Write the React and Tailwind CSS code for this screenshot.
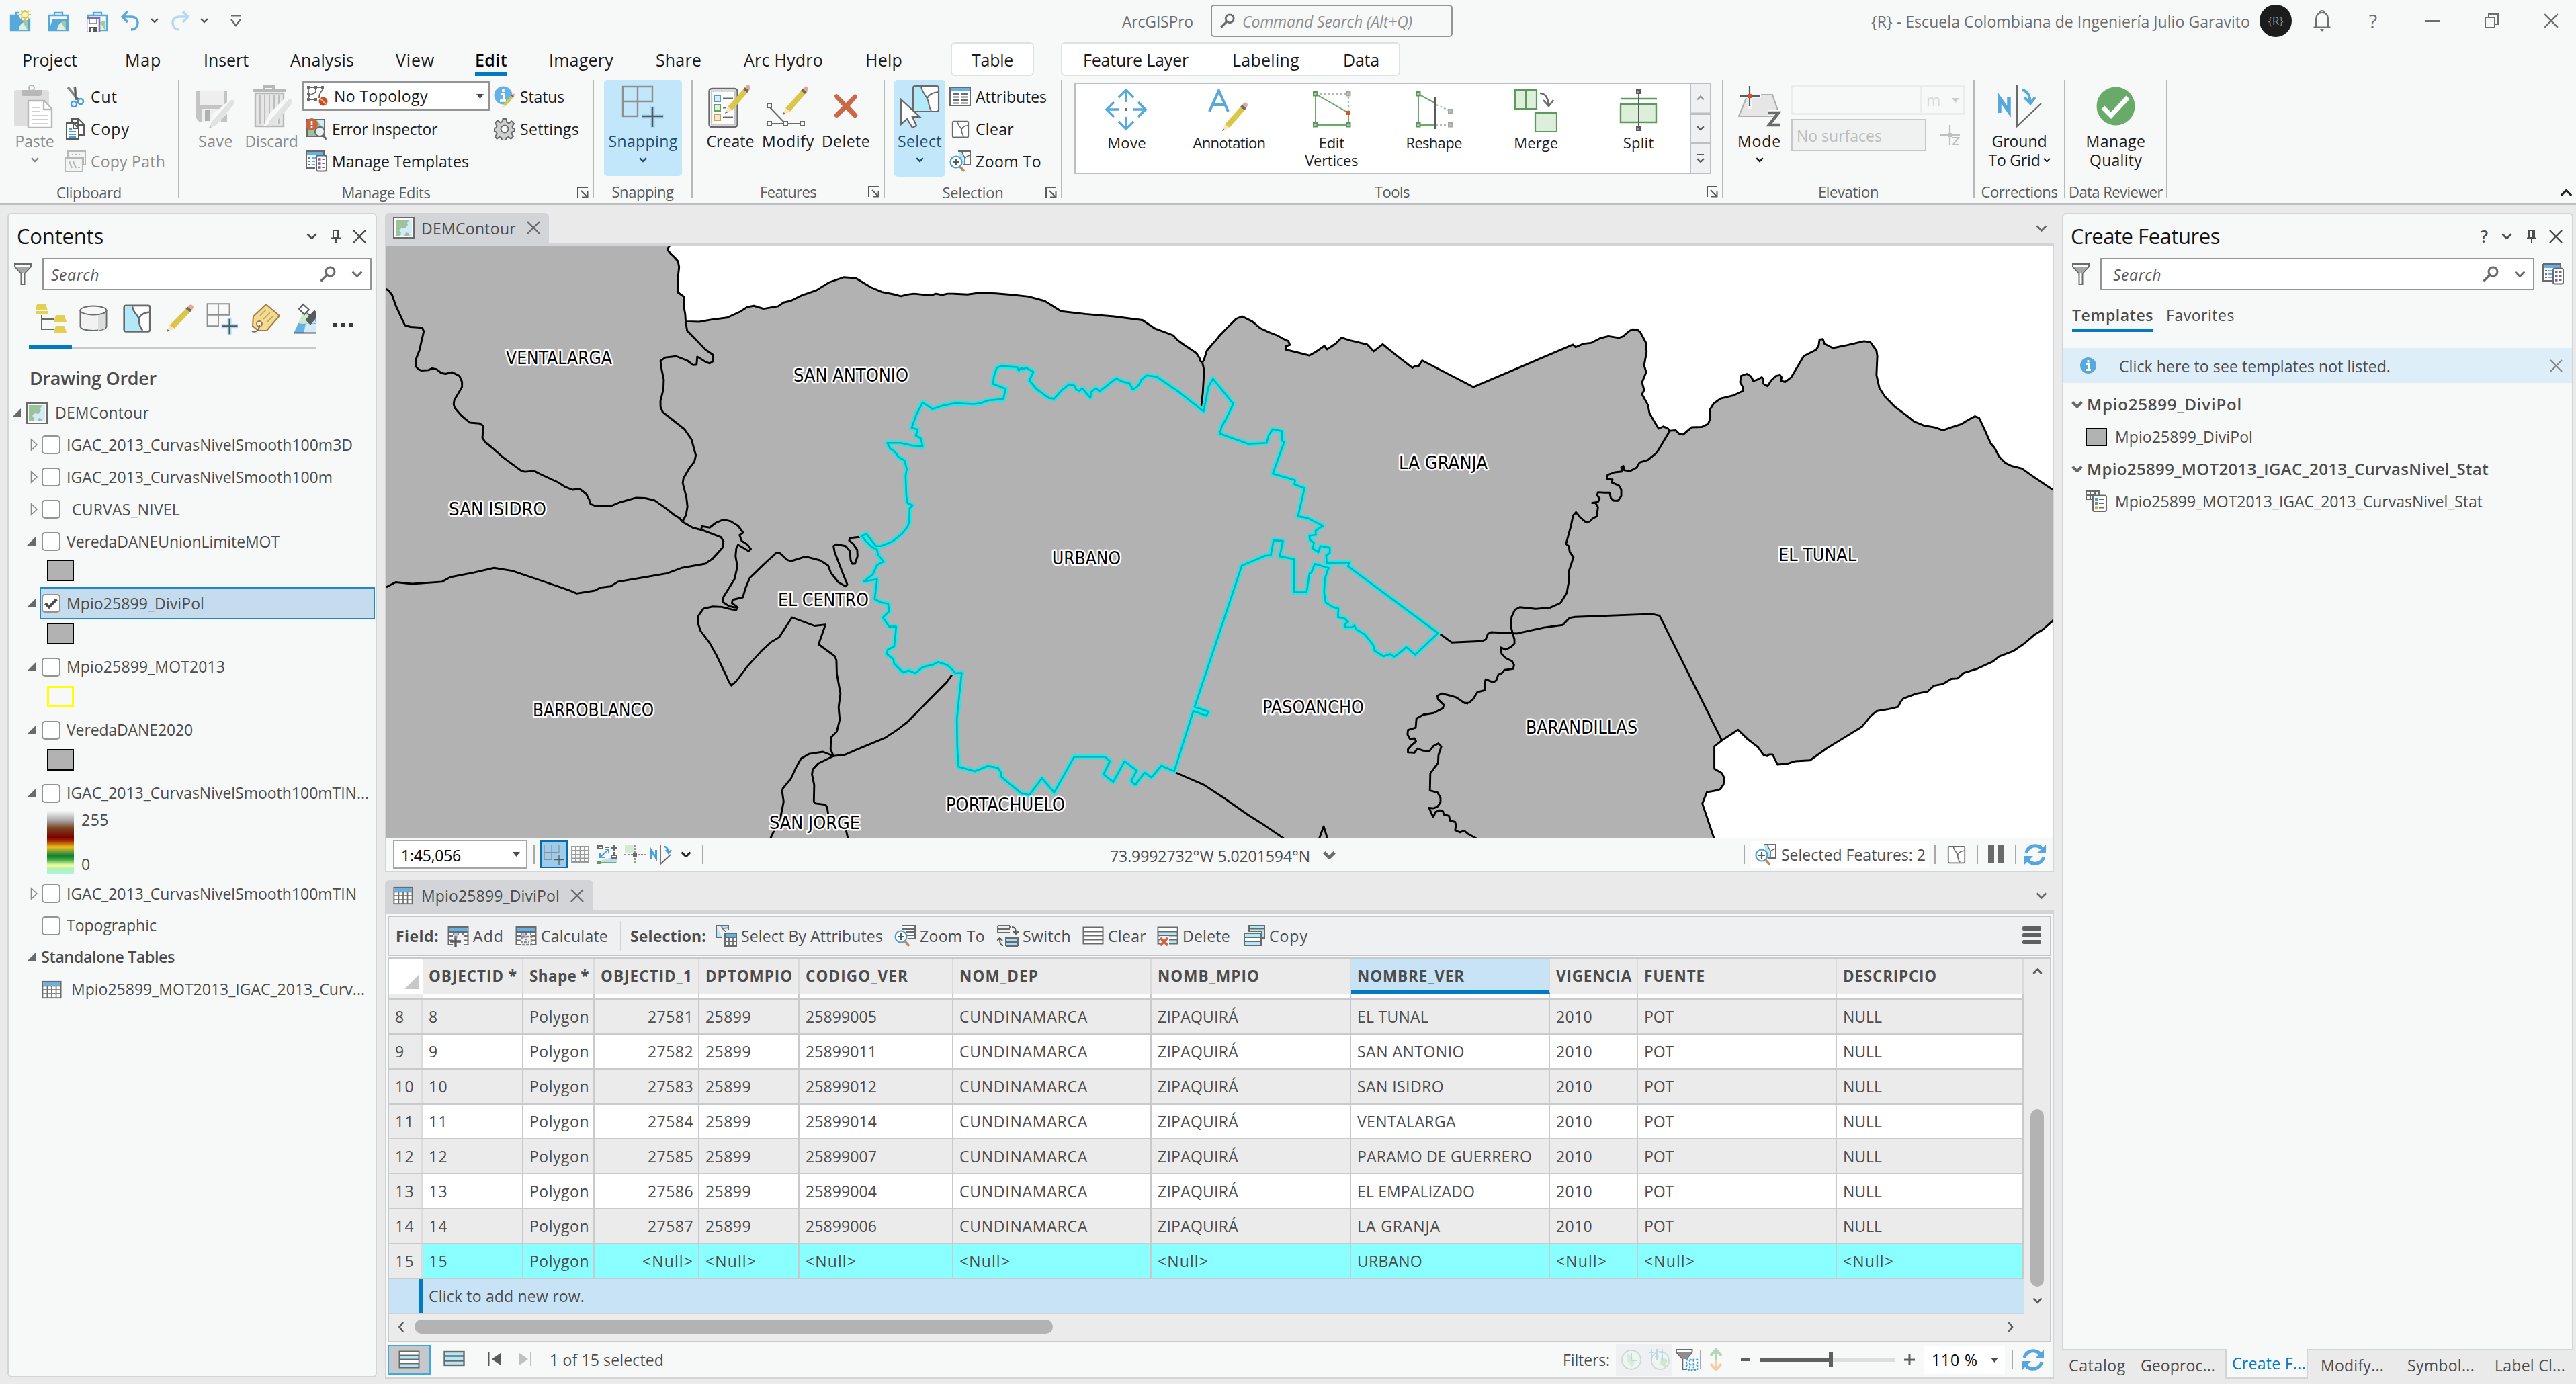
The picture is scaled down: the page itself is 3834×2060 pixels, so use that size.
import React, { useLayoutEffect, useRef } from "react";

/* Text run whose tracking is tuned so that it occupies a given width. */
function T({ w, className = "", children }) {
  const ref = useRef(null);
  useLayoutEffect(() => {
    const el = ref.current;
    if (!el || !w) return;
    el.style.letterSpacing = "0px";
    const natural = el.getBoundingClientRect().width;
    el.style.letterSpacing = `${(w + 3 - natural) / String(children).length}px`;
  });
  return (
    <span className={`inline-flex shrink-0 leading-none ${className}`}>
      <span ref={ref} className="inline-block whitespace-pre">{children}</span>
    </span>
  );
}

/* ---------- small shared glyphs ---------- */
const Svg = ({ s = 32, vb, className = "", children }) => (
  <svg width={s} height={s} viewBox={vb || `0 0 ${s} ${s}`} fill="none" className={`shrink-0 ${className}`}>
    {children}
  </svg>
);
const Chev = ({ className = "", sw = 3, w = 16, up }) => (
  <svg width={w} height={w * 0.62} viewBox="0 0 16 10" fill="none" className={`shrink-0 ${className}`}>
    <path d={up ? "M1.5 8.5 8 2l6.5 6.5" : "M1.5 1.5 8 8l6.5-6.5"} stroke="currentColor" strokeWidth={sw} />
  </svg>
);
const SideChev = ({ right }) => (
  <svg width="10" height="16" viewBox="0 0 10 16" fill="none">
    <path d={right ? "M1.5 1 7 8l-5.5 7" : "M8 1 2.5 8 8 15"} stroke="#5a5a5a" strokeWidth="2.6" />
  </svg>
);
const Down = ({ className = "text-[#4c4c4c]" }) => (
  <svg width="11" height="7" viewBox="0 0 11 7" className={`shrink-0 ${className}`}><path d="M0 0h11L5.500 7z" fill="currentColor" /></svg>
);
const Cross = ({ s = 20, sw = 2.4, className = "text-[#4c4c4c]" }) => (
  <svg width={s} height={s} viewBox="0 0 20 20" className={`shrink-0 ${className}`}>
    <path d="M1 1l18 18M19 1 1 19" stroke="currentColor" strokeWidth={sw} />
  </svg>
);
const Pin = () => (
  <svg width="16" height="20" viewBox="0 0 16 20" fill="none" className="shrink-0">
    <path d="M4 1h8v11H4zM1 12.500h14M8 13v7" stroke="#4c4c4c" strokeWidth="2" />
    <path d="M9 1h3v11H9z" fill="#4c4c4c" />
  </svg>
);
const Magnifier = ({ s = 24, c = "#6a6a6a" }) => (
  <Svg s={s} vb="0 0 24 24">
    <circle cx="15.500" cy="8.500" r="6.500" stroke={c} strokeWidth="3" />
    <path d="M10.500 13.500 1.500 22.500" stroke={c} strokeWidth="3.400" />
  </Svg>
);
const Funnel = () => (
  <svg width="28" height="34" viewBox="0 0 28 34" fill="none" className="shrink-0">
    <path d="M2 2h24v4L16.500 16v16h-5V16L2 6z" fill="#fff" stroke="#6a6a6a" strokeWidth="2" />
    <path d="M3 6h22l-8.500 9h-5z" fill="#a6a6a6" />
  </svg>
);
const Launcher = () => (
  <Svg s={18}>
    <path d="M2 17V2h15M7 7l9 9M16.500 8v8.500H8" stroke="#5a5a5a" strokeWidth="2" />
  </Svg>
);
const Pencil = ({ x = 0, y = 0, k = 1, grey }) => (
  <g transform={`translate(${x} ${y}) scale(${k})`}>
    <path d="M4 33 30 4l6 5L11 38z" fill={grey ? "#e2e2e2" : "#dcc64a"} />
    <path d="M4 33 0 43l11-5z" fill={grey ? "#e2e2e2" : "#fbe2c4"} />
    <path d="M1.500 39 0 43l4-1.500z" fill={grey ? "#bdbdbd" : "#6a6a6a"} />
    <path d="m27 7 3-3 6 5-3 3z" fill={grey ? "#e2e2e2" : "#6a6a6a"} />
    <path d="m30 4 2-2.500q2-2 4.500 0 2.500 2 1 4.500L36 9z" fill={grey ? "#e2e2e2" : "#e8a798"} />
  </g>
);
const MapIcon = ({ s = 32 }) => (
  <Svg s={s} vb="0 0 32 32">
    <rect x="1" y="1" width="30" height="30" fill="#fff" stroke="#6a6a6a" strokeWidth="2" />
    <rect x="4" y="4" width="24" height="24" fill="#9cc39c" />
    <path d="M28 4v24h-3l-2-4-4-1-2 5h-6l1-5-3-3 4-4 5 1 4-5-1-3 3-5z" fill="#d3eaf7" />
  </Svg>
);
const TableIcon = ({ s = 30, children }) => (
  <Svg s={s} vb="0 0 32 32">
    <rect x="1.500" y="3" width="29" height="26" fill="#fff" stroke="#6a6a6a" strokeWidth="2" />
    <path d="M2.500 4h27v5h-27z" fill="#63b1e5" />
    <path d="M2 10h28M2 16h28M2 22.500h28M9 10v19M16 10v19M23 10v19" stroke="#6a6a6a" strokeWidth="1.800" />
    {children}
  </Svg>
);
const PolyIcon = ({ s = 32, cyan }) => (
  <Svg s={s} vb="0 0 32 32">
    <rect x="2" y="2" width="28" height="28" rx="2" fill="#fff" stroke="#6a6a6a" strokeWidth="2" />
    {cyan && <path d="M3 3h8c0 6 7 10 7 14s1 8 4 12H3z" fill="#b3e8f9" />}
    <path d="M11 3c0 6 7 10 7 14s1 8 4 12M18 16c3-6 7-6 12-7" stroke="#6a6a6a" strokeWidth="1.800" />
  </Svg>
);
const ZoomSel = () => (
  <Svg>
    <path d="M13 1h18v20H20" fill="#fff" stroke="#6a6a6a" strokeWidth="2" />
    <path d="M14 2h5l4 18h-6z" fill="#b3e8f9" />
    <path d="M19 2c1 6 4 6 4 10v8M23 12c2-4 5-4 8-5" stroke="#6a6a6a" strokeWidth="1.600" />
    <circle cx="10" cy="17" r="8.500" fill="#fff" stroke="#4a9fd8" strokeWidth="2.200" />
    <path d="M10 12v10M5 17h10" stroke="#5a5a5a" strokeWidth="2.200" />
    <path d="m16 24 6 7" stroke="#c08a4e" strokeWidth="3.500" />
  </Svg>
);
const TemplatesIcon = () => (
  <Svg>
    <path d="M1 1h26v6M1 1v25h13" fill="#fff" stroke="#6a6a6a" strokeWidth="2" />
    <path d="M2 2h24v5H2z" fill="#63b1e5" />
    <path d="M4 11h3M4 16h3M4 21h3" stroke="#7a68a8" strokeWidth="2" />
    <path d="M9 11h6M9 16h5M9 21h5" stroke="#63b1e5" strokeWidth="2" />
    <rect x="16" y="7.500" width="15" height="23" rx="2.500" fill="#fff" stroke="#6a6a6a" strokeWidth="2" />
    <path d="M19 13h3.500M19 19h3.500M19 25h3.500" stroke="#7a58a8" strokeWidth="3.500" />
    <path d="M24.500 13h4M24.500 19h4M24.500 25h4" stroke="#6a6a6a" strokeWidth="2" />
  </Svg>
);
const Refresh = () => (
  <Svg s={34} vb="0 0 34 34">
    <path d="M4 14C6 6 14 2 22 4.500c3 1 5 3 6 4.500" stroke="#55a6dc" strokeWidth="5" />
    <path d="M33 2v13H20z" fill="#55a6dc" />
    <path d="M30 20c-2 8-10 12-18 9.500-3-1-5-3-6-4.500" stroke="#55a6dc" strokeWidth="5" />
    <path d="M1 32V19h13z" fill="#55a6dc" />
  </Svg>
);
const RowsIcon = ({ hl, mid, children }) => (
  <Svg>
    <rect x="1.500" y="3.500" width="29" height="24" fill={hl ? "#b3e8f9" : "#fff"} stroke="#6a6a6a" strokeWidth="2" />
    {mid && <path d="M2.500 4.500h27v5h-27z M2.500 16h27v5h-27z" fill="#fff" />}
    <path d="M2 9.500h28M2 15.500h28M2 21.500h28" stroke="#6a6a6a" strokeWidth="2" />
    {children}
  </Svg>
);

/* ---------- title bar ---------- */
const ProjectBox = ({ kind }) => (
  <Svg>
    <path d="M2 8h28v22H2z" fill={kind === "new" ? "#57a8dc" : "#f7f9f8"} stroke="#57a8dc" strokeWidth="2.400" />
    <path d="M10 8V4h12v4" stroke="#57a8dc" strokeWidth="2.400" />
    {kind === "open" && <path d="M7 14h25l-4 16H2z" fill="#57a8dc" />}
    <path d="M14 29c1-8 6-12 13-12v12z" fill="#e3f0df" />
    <path d="M20 18c2 3 3 6 7 11V17c-3 0-5 0-7 1z" fill="#9ccba0" />
    {kind === "new" && (
      <>
        <circle cx="23" cy="7" r="9" fill="#f7f9f8" />
        <circle cx="23" cy="7" r="5" fill="#fdf3c4" stroke="#dcc64a" strokeWidth="2" />
        <path d="M23-2v3M23 13v4M14 7h3M29 7h4M17 1l2 2M29 1l-2 2M17 13l2-2M29 13l-2-2" stroke="#dcc64a" strokeWidth="2" />
      </>
    )}
    {kind === "save" && (
      <>
        <path d="M0 12h19v21H0z" fill="#fff" stroke="#7f6fb0" strokeWidth="2.600" />
        <path d="M4 13h11v7H4z" fill="#fff" stroke="#7f6fb0" strokeWidth="1.600" />
        <path d="M4 25h11v7H4z" fill="#5a5a5a" />
        <path d="M6 27h3v5H6z" fill="#fff" />
      </>
    )}
  </Svg>
);
const Undo = ({ flip, className = "" }) => (
  <svg width="30" height="30" viewBox="0 0 30 30" fill="none" className={`shrink-0 ${flip ? "-scale-x-100" : ""} ${className}`}>
    <path d="M11 1 3 9l8 8M3 9h13c7 0 10 4 10 9s-3 10-10 10" stroke="currentColor" strokeWidth="3.400" />
  </svg>
);

function TitleBar() {
  return (
    <div className="flex h-[62px] items-center text-[23px] text-[#6e6e6e]">
      <div className="flex w-[1670px] items-center pl-[14px]">
        <div className="w-[57px]"><ProjectBox kind="new" /></div>
        <div className="w-[56px]"><ProjectBox kind="open" /></div>
        <div className="w-[52px] pl-[2px]"><ProjectBox kind="save" /></div>
        <Undo className="text-[#57a8dc]" />
        <Chev w={12} className="ml-[15px] text-[#4c4c4c]" />
        <Undo flip className="ml-[17px] text-[#b5d9f0]" />
        <Chev w={12} className="ml-[15px] text-[#4c4c4c]" />
        <svg width="16" height="18" viewBox="0 0 16 18" fill="none" className="ml-[33px]">
          <path d="M1 1.200h14M1 7l7 9 7-9" stroke="#6a6a6a" strokeWidth="2.400" />
        </svg>
      </div>
      <T w={103} className="pt-[2px]">ArcGISPro</T>
      <div className="ml-[26px] flex h-[48px] w-[360px] shrink-0 items-center gap-[11px] rounded-[5px] border-2 border-[#949494] pl-[12px]">
        <Magnifier s={22} />
        <T w={250} className="pt-[2px] text-[#8f8f8f] italic">Command Search (Alt+Q)</T>
      </div>
      <T w={561} className="ml-[623px] pt-[2px]">{"{R} - Escuela Colombiana de Ingeniería Julio Garavito"}</T>
      <div className="ml-[14px] flex size-12 shrink-0 items-center justify-center rounded-full bg-[#1c1c1c] text-[17px] text-[#8a8a8a]">{"{R}"}</div>
      <svg width="28" height="34" viewBox="0 0 28 34" fill="none" className="ml-[31px]">
        <path d="M1.500 26.500h25M5 26V15c0-6 3-10 9-10s9 4 9 10v11M11 5c0-4 6-4 6 0" stroke="#6e6e6e" strokeWidth="2.200" />
        <path d="M11 29h6l-3 4z" fill="#6e6e6e" />
      </svg>
      <span className="ml-[56px] text-[28px] leading-none">?</span>
      <div className="ml-[72px] h-[3px] w-[21px] bg-[#6e6e6e]" />
      <svg width="22" height="22" viewBox="0 0 22 22" fill="none" className="ml-[67px]">
        <path d="M1 6h14v15H1zM6 6V1h14v15h-5" stroke="#6e6e6e" strokeWidth="2" />
      </svg>
      <Cross s={22} sw={2} className="ml-[66px] text-[#6e6e6e]" />
    </div>
  );
}

const TABS = [
  ["Project", 79, "w-[153px]"], ["Map", 51, "w-[117px]"], ["Insert", 64, "w-[129px]"], ["Analysis", 92, "w-[157px]"],
  ["View", 55, "w-[118px]"], ["Edit", 45, "w-[110px]"], ["Imagery", 93, "w-[159px]"], ["Share", 65, "w-[131px]"],
  ["Arc Hydro", 115, "w-[181px]"], ["Help", 52, "w-[127px]"],
];
function RibbonTabs() {
  return (
    <div className="flex h-[52px] items-center pl-[33px] text-[25px] text-[#1a1a1a]">
      {TABS.map(([n, w, c]) => (
        <div key={n} className={`${c} flex h-[52px] shrink-0`}>
          <div className={`box-border flex h-[51px] pt-[15px] ${n === "Edit" ? "border-b-[6px] border-[#007ac2] font-semibold text-black" : ""}`}>
            <T w={w}>{n}</T>
          </div>
        </div>
      ))}
      <div className="flex h-[50px] w-[124px] items-center justify-center rounded-[6px] border-2 border-[#e0e1e1] bg-white pt-[2px]">
        <T w={59}>Table</T>
      </div>
      <div className="ml-[40px] flex h-[50px] w-[505px] items-center rounded-[6px] border-2 border-[#e0e1e1] bg-white pt-[2px] pl-[31px]">
        <T w={154}>Feature Layer</T>
        <T w={97} className="ml-[65px]">Labeling</T>
        <T w={51} className="ml-[65px]">Data</T>
      </div>
    </div>
  );
}

/* ---------- ribbon ---------- */
const Group = ({ label, lw, w, launcher, children }) => (
  <div className={`${w} flex h-[176px] shrink-0 flex-col border-r-2 border-[#b9b9bb]`}>
    <div className="flex h-[144px]">{children}</div>
    <div className="mt-[12px] flex h-[21px] items-center">
      <div className="w-[24px]" />
      <div className="flex flex-1 justify-center"><T w={lw} className="text-[22px] text-[#5c5c5c]">{label}</T></div>
      <div className="w-[24px]">{launcher && <Launcher />}</div>
    </div>
  </div>
);
const Big = ({ icon, label, w, label2, w2, chev, cls = "", inline }) => (
  <div className={`flex shrink-0 flex-col items-center pt-[6px] ${cls}`}>
    <div className="flex h-[65px] items-center">{icon}</div>
    <div className="mt-[6px] flex h-[28px] items-center"><T w={w}>{label}</T></div>
    <div className="flex h-[28px] items-center">
      {label2 && <T w={w2}>{label2}</T>}
      {inline && <Chev w={11} className="ml-[4px]" />}
      {chev && <Chev w={12} sw={3.200} />}
    </div>
  </div>
);
const Small = ({ icon, label, w, cls = "" }) => (
  <div className={`flex h-[48px] items-center ${cls}`}>
    <div className="flex w-[32px] justify-center">{icon}</div>
    <T w={w} className="ml-[7px] pt-[1px]">{label}</T>
  </div>
);

const PasteIcon = () => (
  <Svg s={64}>
    <rect x="3" y="8" width="52" height="54" rx="4" fill="#dedede" transform="translate(-2 0)" />
    <path d="M12 8h30v6q0 3-3 3H15q-3 0-3-3z" fill="#b8b8b8" />
    <circle cx="27" cy="5" r="4" fill="#f7f9f8" stroke="#b8b8b8" strokeWidth="2" />
    <path d="M22 24h24l11 12v28H22z" fill="#fff" stroke="#b8b8b8" strokeWidth="2.400" />
    <path d="M45 24v13h12" stroke="#b8b8b8" strokeWidth="2.400" />
    <path d="M28 34h12M28 40h12M28 46h23M28 52h23M28 58h23" stroke="#cfcfcf" strokeWidth="2" />
  </Svg>
);
const CutIcon = () => (
  <Svg>
    <path d="M5 2 21 21M15 1l3 20" stroke="#8a8a8a" strokeWidth="3.600" />
    <path d="M16 1v16l5 4" stroke="#5a5a5a" strokeWidth="2.400" />
    <circle cx="14" cy="27" r="4" stroke="#4a9fd8" strokeWidth="2.600" />
    <circle cx="24" cy="23" r="4" stroke="#4a9fd8" strokeWidth="2.600" />
  </Svg>
);
const CopyIcon = () => (
  <Svg>
    <path d="M11 1h10l8 8v16h-9V7h-9z" fill="#fff" stroke="#5a5a5a" strokeWidth="2" />
    <path d="M20 1v9h9" stroke="#5a5a5a" strokeWidth="2" />
    <path d="M3 7h10l8 8v16H3z" fill="#fff" stroke="#5a5a5a" strokeWidth="2" />
    <path d="M13 7v8h8" stroke="#5a5a5a" strokeWidth="2" />
    <path d="M7 16h4M7 20h10M7 24h10M7 28h10" stroke="#4a9fd8" strokeWidth="2" />
  </Svg>
);
const CopyPathIcon = () => (
  <Svg>
    <path d="M5 1h26v20h-3V10H5z" fill="#f3f3f3" stroke="#b8b8b8" strokeWidth="2" />
    <rect x="1" y="11" width="26" height="20" fill="#f3f3f3" stroke="#b8b8b8" strokeWidth="2" />
    <path d="m7 16 4 10M13 16l4 10M20 25h3M11 6h2M16 6h2M21 6h2" stroke="#b8b8b8" strokeWidth="2.200" />
  </Svg>
);
const SaveEdits = () => (
  <Svg s={64}>
    <path d="M3 9h46v47H8l-5-6z" fill="#c4c4c4" />
    <path d="M8 10h36v21H8z" fill="#eee" />
    <path d="M12 36h28v20H12z" fill="#eee" />
    <path d="M16 38h7v16h-7z" fill="#b0b0b0" />
    <path d="M20 62 28 44 56 20l8 8-28 28z" fill="#f7f9f8" />
    <Pencil x="22" y="22" k="1" grey />
  </Svg>
);
const DiscardIcon = () => (
  <Svg s={64}>
    <path d="M4 9h50M21 9V3h14v6" stroke="#b8b8b8" strokeWidth="4" />
    <path d="M8 13h42v49H8z" fill="#e6e6e6" stroke="#b8b8b8" strokeWidth="2.400" />
    <path d="M15 15v44M22 15v44M29 15v44M36 15v44M43 15v44" stroke="#bdbdbd" strokeWidth="2" />
    <path d="M20 62 30 42 54 18l10 8-28 32z" fill="#f7f9f8" />
    <Pencil x="25" y="21" k="1" grey />
  </Svg>
);
const NoTopologyIcon = () => (
  <Svg>
    <path d="M3 3h21v6M3 3v18h12M14 3v6c0 5-10 3-10 8M24 3v4c-5 6-5 8-5 12" stroke="#6a6a6a" strokeWidth="1.800" />
    <path d="M1 1h4v4H1zM12 1h4v4h-4zM22 1h4v4h-4zM1 11h4v4H1zM1 19h4v4H1zM12 19h4v4h-4z" fill="#6a6a6a" />
    <circle cx="25" cy="24" r="6.500" fill="#d04a20" />
    <path d="m21 20 8 8" stroke="#f7c0a8" strokeWidth="2" />
  </Svg>
);
const ErrorInspector = () => (
  <Svg>
    <rect x="2" y="2" width="26" height="25" fill="#9cc39c" stroke="#6a6a6a" strokeWidth="2" />
    <path d="M17 3h10v10l-5-3z" fill="#d3eaf7" />
    <circle cx="9" cy="9" r="9" fill="#cb6242" />
    <path d="M9 4v6M9 12v3" stroke="#fff" strokeWidth="2.600" />
    <circle cx="21" cy="20" r="7" fill="#e9f0ec" stroke="#6a6a6a" strokeWidth="2" />
    <path d="m25 25 6 6.500" stroke="#6a6a6a" strokeWidth="3" />
  </Svg>
);
const StatusIcon = () => (
  <Svg>
    <circle cx="14" cy="14" r="13.500" fill="#66b2e6" />
    <path d="M10 12h5v10M9 22h9M14 5v4" stroke="#fff" strokeWidth="3.400" />
    <Pencil x="12" y="11" k="0.500" />
  </Svg>
);
const GearIcon = () => (
  <Svg>
    <path d="M13.500 1h5l1 5 3 1.400 4-3 3.500 3.600-2.600 4.200 1 2.800H31v4l-3.600 1.600-1 2.400 2.600 4-3.500 3.600-4-2.600-3 1.400-1 4.600h-5l-1-4.600-3-1.400-4 2.600L2 27.200l2.600-4-1-2.400L0 19v-4l3.600-1 1-2.800L2 7l3.500-3.600 4 3 3-1.400z" fill="#cfcfcf" stroke="#6a6a6a" strokeWidth="2" />
    <circle cx="16" cy="16" r="5.500" fill="#f7f9f8" stroke="#6a6a6a" strokeWidth="2" />
  </Svg>
);
const SnapIcon = ({ s = 64 }) => (
  <Svg s={s} vb="0 0 64 64">
    <path d="M2 3h44v22H2zM2 25h22v22H2zM24 3v22" stroke="#8f8f8f" strokeWidth="2.400" />
    <path d="M46 32v32M30 47h33" stroke="#a8dcfa" strokeWidth="8" />
    <path d="M46 33v30M31 47h31" stroke="#555" strokeWidth="2.600" />
  </Svg>
);
const CreateIcon = () => (
  <Svg s={66} vb="0 0 66 66">
    <rect x="1.500" y="7" width="42" height="57" rx="4" fill="#fff" stroke="#6a6a6a" strokeWidth="2.400" />
    <rect x="5" y="10.500" width="35" height="50" stroke="#c9c9c9" strokeWidth="2.400" />
    <rect x="9" y="17" width="9" height="9" fill="#dceefa" stroke="#4a9fd8" strokeWidth="2" />
    <rect x="9" y="31" width="9" height="9" fill="#dff0dc" stroke="#5fa55f" strokeWidth="2" />
    <rect x="9" y="45" width="9" height="9" fill="#fdeacc" stroke="#e0984a" strokeWidth="2" />
    <path d="M22 21.500h15M22 35.500h5M22 49.500h15" stroke="#6a6a6a" strokeWidth="2" />
    <Pencil x="25" y="1" />
  </Svg>
);
const ModifyIcon = () => (
  <Svg s={64}>
    <path d="m3 32 25 26M3 58h52" stroke="#6a6a6a" strokeWidth="2" />
    <path d="M1 28h6v6H1zM1 55h6v6H1zM25 55h6v6h-6zM50 55h6v6h-6z" fill="#f7f9f8" stroke="#6a6a6a" strokeWidth="2" />
    <Pencil x="24" y="2" />
  </Svg>
);
const SelectIcon = () => (
  <Svg s={64}>
    <rect x="22" y="2" width="38" height="38" rx="3" fill="#fff" stroke="#6a6a6a" strokeWidth="2.200" />
    <path d="M23 3h11c1 8 8 14 10 20s1 10 5 16H23z" fill="#b3eaf9" />
    <path d="M34 3c1 8 8 14 10 20s1 10 5 16M43 20c4-7 10-8 17-9" stroke="#6a6a6a" strokeWidth="2" />
    <path d="M4 22v37l9-8 8 13 6-3-6-13h11z" fill="#fff" stroke="#6a6a6a" strokeWidth="2.200" />
  </Svg>
);
const AttributesIcon = () => (
  <Svg>
    <rect x="1" y="2" width="30" height="27" fill="#fff" stroke="#6a6a6a" strokeWidth="2" />
    <path d="M2 3h28v5H2z" fill="#63b1e5" />
    <path d="M5 12h9M17 12h10M5 16.500h9M17 16.500h10M5 21h9M17 21h10M5 25.500h9M17 25.500h10" stroke="#6a6a6a" strokeWidth="2.200" />
  </Svg>
);

const GreenSq = ({ x, y, c = "#5b965b" }) => <rect x={x - 3} y={y - 3} width="5.500" height="5.500" fill="#a9cfa9" stroke={c} strokeWidth="2" />;
const TOOLS = [
  ["Move", 55, null, 0,
    <>
      <path d="M31 20V4M31 42v16M20 31H4M42 31h16" stroke="#57a8dc" strokeWidth="3.600" />
      <path d="m20 13 11-11 11 11M20 49l11 11 11-11M13 20 2 31l11 11M49 20l11 11-11 11" stroke="#57a8dc" strokeWidth="3.600" />
      <path d="M29 29h4v4h-4z" fill="#6a6a6a" />
    </>],
  ["Annotation", 105, null, 0,
    <>
      <path d="M3 34 17 3l14 31M8 24h18" stroke="#57a8dc" strokeWidth="4" />
      <Pencil x="22" y="20" k="1" />
    </>],
  ["Edit", 35, "Vertices", 76,
    <>
      <path d="M8 8v46h49V36z" stroke="#67ac67" strokeWidth="2" />
      <path d="M8 8h49v28" stroke="#b5b5b5" strokeWidth="2.400" strokeDasharray="3 3" />
      <GreenSq x={8} y={8} /><GreenSq x={8} y={54} /><GreenSq x={57} y={54} /><GreenSq x={57} y={8} c="#a6a6a6" />
      <rect x="54" y="33" width="6" height="6" fill="#d9532a" />
    </>],
  ["Reshape", 80, null, 0,
    <>
      <path d="M35 22 9 8v46h26" stroke="#67ac67" strokeWidth="2" />
      <path d="m36 24 22 10M35 54h22" stroke="#b5b5b5" strokeWidth="2.400" strokeDasharray="3 3" />
      <path d="M34 12v48" stroke="#5a5a5a" strokeWidth="2" />
      <GreenSq x={9} y={8} /><GreenSq x={9} y={54} /><GreenSq x={57} y={34} c="#a6a6a6" /><GreenSq x={57} y={54} c="#a6a6a6" />
    </>],
  ["Merge", 63, null, 0,
    <>
      <path d="M1 2h32v28H1zM17 2v28M31 36h32v28H31z" fill="#ddeedb" stroke="#5b9a5b" strokeWidth="2.200" />
      <path d="M38 7c8 0 12 6 13 18M43 17l8 9 7-9" stroke="#6a6a6a" strokeWidth="2.600" />
    </>],
  ["Split", 43, null, 0,
    <>
      <path d="M5 15h54" stroke="#5b9a5b" strokeWidth="2.400" />
      <path d="M5 23h53v27H5z" fill="#ddeedb" stroke="#5b9a5b" strokeWidth="2.400" />
      <path d="M32 5v52" stroke="#5a5a5a" strokeWidth="2" />
      <path d="M29 2h5v5h-5zM29 57h5v5h-5z" fill="#999" stroke="#5a5a5a" strokeWidth="2" />
    </>],
];

function Ribbon() {
  return (
    <div className="flex h-[191px] border-b-[3px] border-[#bdbec2] pt-[5px] text-[23px] text-[#1c1c1c]">
      <Group label="Clipboard" lw={94} w="w-[267px]">
        <Big cls="ml-[6px] w-[91px] text-[#8c8c8c]" icon={<PasteIcon />} label="Paste" w={55} chev />
        <div className="-ml-[1px] pt-[1px]">
          <Small icon={<CutIcon />} label="Cut" w={37} />
          <Small icon={<CopyIcon />} label="Copy" w={55} />
          <Small icon={<CopyPathIcon />} label="Copy Path" w={108} cls="text-[#8c8c8c]" />
        </div>
      </Group>
      <Group label="Manage Edits" lw={129} w="w-[617px]" launcher>
        <Big cls="ml-[16px] w-[76px] text-[#8c8c8c]" icon={<SaveEdits />} label="Save" w={49} />
        <Big cls="w-[90px] text-[#8c8c8c]" icon={<DiscardIcon />} label="Discard" w={76} />
        <div className="w-[286px] pt-[1px]">
          <div className="mt-[1px] mb-[3px] flex h-[44px] w-[281px] items-center border-[3px] border-[#949494] bg-white pr-[7px] pl-[4px]">
            <NoTopologyIcon />
            <T w={137} className="ml-[9px] pt-[1px]">No Topology</T>
            <div className="ml-auto"><Down /></div>
          </div>
          <Small cls="ml-[6px]" icon={<ErrorInspector />} label="Error Inspector" w={154} />
          <Small cls="ml-[6px]" icon={<TemplatesIcon />} label="Manage Templates" w={201} />
        </div>
        <div className="pt-[1px]">
          <Small icon={<StatusIcon />} label="Status" w={63} />
          <Small icon={<GearIcon />} label="Settings" w={85} />
        </div>
      </Group>
      <Group label="Snapping" lw={89} w="w-[147px]">
        <Big cls="ml-[15px] w-[116px] rounded-[5px] bg-[#c2e6fa] text-[#1f4e75]" icon={<SnapIcon />} label="Snapping" w={100} chev />
      </Group>
      <Group label="Features" lw={81} w="w-[286px]" launcher>
        <Big cls="ml-[13px] w-[86px]" icon={<CreateIcon />} label="Create" w={68} />
        <Big cls="w-[86px]" icon={<ModifyIcon />} label="Modify" w={75} />
        <Big cls="w-[86px]" icon={<Svg s={40}><path d="M4 3q2-2 4 0l12 12L32 3q2-2 4 1t0 4L26 20l10 11q3 3 0 5-3 3-5 0L20 25 9 36q-3 2-5 0-3-2 0-5l11-11L4 8q-2-3 0-5" fill="#cb6847" /></Svg>} label="Delete" w={69} />
      </Group>
      <Group label="Selection" lw={88} w="w-[264px]" launcher>
        <Big cls="ml-[14px] w-[76px] rounded-[5px] bg-[#c2e6fa] text-[#1f4e75]" icon={<SelectIcon />} label="Select" w={63} chev />
        <div className="ml-[6px] pt-[1px]">
          <Small icon={<AttributesIcon />} label="Attributes" w={103} />
          <Small icon={<PolyIcon s={27} />} label="Clear" w={54} />
          <Small icon={<ZoomSel />} label="Zoom To" w={95} />
        </div>
      </Group>
      <Group label="Tools" lw={49} w="w-[984px]" launcher>
        <div className="mt-[4px] ml-[18px] flex h-[136px] w-[948px] border-2 border-[#bdbec2] bg-white text-[22px]">
          {TOOLS.map(([a, w, b, wb, art]) => (
            <div key={a} className="flex w-[152.300px] flex-col items-center pt-[7px]">
              <Svg s={64}>{art}</Svg>
              <div className="mt-[6px] flex h-[20px] items-center"><T w={w}>{a}</T></div>
              {b && <div className="mt-[6px] flex h-[20px] items-center"><T w={wb}>{b}</T></div>}
            </div>
          ))}
          <div className="flex flex-1 flex-col border-l-2 border-[#bdbec2] bg-[#eef0f2] text-[#5a5a5a]">
            <div className="flex h-[43px] items-center justify-center border-b-2 border-[#d5d6da]"><Chev up w={12} className="text-[#909090]" /></div>
            <div className="flex h-[46px] items-center justify-center border-y-[3px] border-[#bdbec2]"><Chev w={12} /></div>
            <div className="flex flex-1 flex-col items-center justify-center gap-[4px]"><div className="h-[2px] w-[11px] bg-[#5a5a5a]" /><Chev w={12} /></div>
          </div>
        </div>
      </Group>
      <Group label="Elevation" lw={87} w="w-[374px]">
        <Big cls="ml-[15px] w-[77px]" label="Mode" w={62} chev icon={
          <Svg s={64}>
            <path d="M14 15h37l11 32H1z" fill="#e6e6e6" stroke="#b0b0b0" strokeWidth="2.200" />
            <path d="M17 0v36M0 17h34" stroke="#f7f9f8" strokeWidth="6" />
            <path d="M17 2v30M2 17h30" stroke="#5a5a5a" strokeWidth="2.200" />
            <path d="M14 14h6v6h-6z" fill="#d9532a" />
            <path d="M44 42h16v6L50 60h12M44 60" stroke="#f7f9f8" strokeWidth="10" />
            <path d="M44 42h16L46 60h16" stroke="#6a6a6a" strokeWidth="4.500" />
          </Svg>} />
        <div className="ml-[9px] text-[#bdbdbd]">
          <div className="mt-[8px] flex h-[44px] w-[259px] border-[3px] border-[#ebecec]">
            <div className="w-[192px] border-r-[3px] border-[#ebecec]" />
            <div className="flex flex-1 items-center justify-between px-[6px]"><T w={18} className="text-[#d8d8d8]">m</T><Down className="text-[#cccccc]" /></div>
          </div>
          <div className="mt-[6px] flex items-center gap-[18px]">
            <div className="flex h-[48px] w-[201px] items-center border-2 border-[#c6c8c8] bg-[#f0f2f1] pt-[2px] pl-[6px]"><T w={124}>No surfaces</T></div>
            <Svg><path d="M17 1v30M2 16h30M21 20h9l-8 10h9" stroke="#c0c0c0" strokeWidth="2.200" /><rect x="14" y="13" width="6" height="6" fill="#c0c0c0" /></Svg>
          </div>
        </div>
      </Group>
      <Group label="Corrections" lw={111} w="w-[135px]">
        <Big cls="w-[133px]" label="Ground" w={79} label2="To Grid" w2={74} inline icon={
          <Svg s={66} vb="0 0 66 66">
            <path d="M3 43V21l14 20V19" stroke="#57a8dc" strokeWidth="5.500" />
            <path d="M29 1v62l36-34" stroke="#6a6a6a" strokeWidth="2.200" />
            <path d="M36 9c9 1 12 8 13 19M40 20l9 9 7-9" stroke="#57a8dc" strokeWidth="4" />
          </Svg>} />
      </Group>
      <Group label="Data Reviewer" lw={137} w="w-[152px]">
        <Big cls="w-[150px]" label="Manage" w={86} label2="Quality" w2={75} icon={
          <Svg s={58}><circle cx="29" cy="29" r="28.500" fill="#68ab68" /><path d="m10 31 12 12L47 16" stroke="#fff" strokeWidth="7" /></Svg>} />
      </Group>
      <div className="flex flex-1 items-end justify-end pr-[5px] pb-[9px]"><Chev up w={19} sw={2.600} /></div>
    </div>
  );
}

/* ---------- contents pane ---------- */
const SearchBox = ({ cls }) => (
  <div className={`flex h-[48px] shrink-0 items-center border-2 border-[#949494] bg-white pr-[11px] ${cls}`}>
    <T w={69} className="mr-auto pt-[2px] text-[#5a5a5a] italic">Search</T>
    <Magnifier />
    <Chev w={17} sw={2.600} className="ml-[23px] text-[#6a6a6a]" />
  </div>
);
const Tri = ({ open }) => (
  <svg width="17" height="20" viewBox="0 0 17 20" fill="none" className="shrink-0">
    {open ? <path d="M0 16 13 3v13z" fill="#6a6a6a" /> : <path d="M6.500 2v16L15 10z" stroke="#8a8a8a" strokeWidth="1.600" />}
  </svg>
);
const Layer = ({ tri, checked, sel, label, w, h = "h-[48px]", pad = "" }) => (
  <div className={`flex items-center pl-[27px] ${h}`}>
    <div className="w-[19px]">{tri && <Tri open={tri === "open"} />}</div>
    <div className={`mr-[1px] flex h-full flex-1 items-center border-2 pl-[1px] ${sel ? "border-[#2289c9] bg-[#c5dbee]" : "border-transparent"}`}>
      <div className="flex size-[28px] shrink-0 items-center justify-center rounded-[5px] border-2 border-[#949494] bg-white">
        {checked && <svg width="20" height="16" viewBox="0 0 20 16" fill="none"><path d="m1.500 8 5.500 5.500L18.500 2" stroke="#4c4c4c" strokeWidth="4" /></svg>}
      </div>
      <T w={w} className={`ml-[9px] ${pad}`}>{label}</T>
    </div>
  </div>
);
const Swatch = ({ cls = "h-[47px] pt-[5px]", yellow }) => (
  <div className={`flex pl-[57px] ${cls}`}>
    <div className={`h-[32px] w-[40px] ${yellow ? "border-[3px] border-[#ffff00]" : "border-2 border-black bg-[#b2b2b2]"}`} />
  </div>
);

function ContentsPane() {
  return (
    <div className="ml-[11px] flex h-[1733px] w-[550px] shrink-0 flex-col rounded-[6px] border-2 border-[#d2d4d8] bg-[#f7f9f8] text-[23px] text-[#4c4c4c]">
      <div className="flex h-[65px] shrink-0 items-center pr-[14px] pl-[12px]">
        <T w={126} className="text-[31px] text-[#151515]">Contents</T>
        <Chev w={16} sw={2.800} className="ml-auto" />
        <div className="ml-[20px]"><Pin /></div>
        <Cross className="ml-[17px] text-[#4c4c4c]" />
      </div>
      <div className="flex items-center pl-[7px]"><Funnel /><SearchBox cls="ml-[15px] w-[490px] pl-[11px]" /></div>
      <div className="mt-[9px] flex h-[65px] shrink-0 items-center pl-[40px]">
        <Svg s={46}>
          <path d="M2 1h13l3 10H0zM0 12h18v5H0z" fill="#e3cf52" />
          <path d="M9 18v21h19M9 24h19" stroke="#6a6a6a" strokeWidth="2" />
          <path d="M30 18h13l3 10H27zM30 34h13l3 10H27z" fill="#e3cf52" />
        </Svg>
        <Svg s={42} className="ml-[19px]">
          <path d="M1.500 9v24c0 3.500 8 6 19.500 6s19.500-2.500 19.500-6V9" fill="#f2f2f2" stroke="#6a6a6a" strokeWidth="2" />
          <path d="M28 14h11v22l-11 3z" fill="#dcdcdc" />
          <ellipse cx="21" cy="9" rx="19.500" ry="6.500" fill="#f7f7f7" stroke="#6a6a6a" strokeWidth="2" />
        </Svg>
        <div className="ml-[22px]"><PolyIcon s={44} cyan /></div>
        <Svg s={42} className="ml-[21px]"><g transform="scale(1.050 .95)"><Pencil x="1" y="0" /></g></Svg>
        <div className="ml-[18px]"><SnapIcon s={48} /></div>
        <Svg s={46} className="ml-[18px]">
          <path d="M4 20 23 2l20 17-19 22H11L3 34z" fill="#f1dc93" stroke="#b07a3c" strokeWidth="2" />
          <path d="m14 19 9-9M19 24l10-10M24 29l10-10" stroke="#c99a5c" strokeWidth="1.600" />
          <circle cx="13" cy="31" r="4" fill="#f7f9f8" stroke="#b07a3c" strokeWidth="2" />
          <path d="M13 33c0 8-5 11-11 9" stroke="#6a6a6a" strokeWidth="2" />
        </Svg>
        <svg width="34" height="46" viewBox="0 0 34 46" fill="none" className="ml-[18px] shrink-0">
          <path d="M14 16h20v29H0z" fill="#66b2e6" /><path d="M14 16h11l9 14-21 1-6-1z" fill="#cfe6cf" />
          <path d="M18 31h16v14H15z" fill="#d3eaf7" /><path d="M0 44.500h34" stroke="#5a5a5a" strokeWidth="2" />
          <path d="m14 2 9 8-7 7-8-8z" fill="#fff" stroke="#5a5a5a" strokeWidth="2" />
          <path d="m20 15 9 8M19 25l12-13 5 5-11 14z" stroke="#5a5a5a" strokeWidth="2.200" fill="#5a5a5a" />
        </svg>
        <div className="mt-[20px] ml-[24px] flex gap-[6px]"><i className="size-[6px] bg-[#3a3a3a]" /><i className="size-[6px] bg-[#3a3a3a]" /><i className="size-[6px] bg-[#3a3a3a]" /></div>
      </div>
      <div className="mt-[7px] ml-[30px] flex w-[427px] items-end"><div className="h-[6px] w-[64px] bg-[#007ac2]" /><div className="h-[2px] flex-1 bg-[#c8c9ca]" /></div>
      <div className="flex h-[72px] shrink-0 items-center pt-[14px] pl-[31px]"><T w={186} className="text-[27px] font-semibold">Drawing Order</T></div>
      <div className="flex h-[47px] shrink-0 items-center pl-[5px]"><Tri open /><div className="ml-[4px]"><MapIcon /></div><T w={137} className="ml-[11px]">DEMContour</T></div>
      <Layer tri="closed" label="IGAC_2013_CurvasNivelSmooth100m3D" w={423} />
      <Layer tri="closed" label="IGAC_2013_CurvasNivelSmooth100m" w={393} />
      <Layer tri="closed" label="CURVAS_NIVEL" w={158} pad="pl-[8px]" />
      <Layer tri="open" label="VeredaDANEUnionLimiteMOT" w={314} />
      <Swatch cls="h-[44px] pt-[3px]" />
      <Layer tri="open" checked sel label="Mpio25899_DiviPol" w={202} />
      <Swatch />
      <Layer tri="open" label="Mpio25899_MOT2013" w={233} h="h-[47px]" />
      <Swatch yellow />
      <Layer tri="open" label="VeredaDANE2020" w={185} h="h-[47px]" />
      <Swatch />
      <Layer tri="open" label="IGAC_2013_CurvasNivelSmooth100mTIN..." w={447} h="h-[47px]" />
      <div className="mt-[3px] mb-[5px] flex pl-[57px]">
        <div className="h-[94px] w-[40px] bg-[linear-gradient(to_bottom,#f7f7f7_0%,#a8a8a8_15%,#7a4420_27%,#7d0000_42%,#a83000_48%,#efc020_57%,#0d8038_71%,#3cab3c_77%,#fbfbae_86%,#b4f4a4_91%,#a8f2ee_100%)]" />
        <div className="flex flex-col justify-between pt-[2px] pl-[11px]"><T w={38}>255</T><T w={13} className="pb-[3px]">0</T></div>
      </div>
      <Layer tri="closed" label="IGAC_2013_CurvasNivelSmooth100mTIN" w={429} />
      <Layer label="Topographic" w={131} h="h-[47px]" />
      <div className="flex h-[48px] items-center pl-[27px]"><Tri open /><T w={196} className="ml-[4px] text-[23.500px] font-semibold">Standalone Tables</T></div>
      <div className="flex h-[47px] items-center pl-[49px]"><TableIcon /><T w={434} className="ml-[14px]">Mpio25899_MOT2013_IGAC_2013_Curv...</T></div>
    </div>
  );
}

/* ---------- map ---------- */
/* Digitised line work is kept in three sheets, each with its own origin and scale. */
const SHEET_W = "matrix(.54210 0 0 .625 570 310)";
const SHEET_C = "matrix(.60588 0 0 .51020 1240 500)";
const SHEET_E = "matrix(.61862 0 0 .63140 2100 310)";

const W_EDGE = "788,88 781,100 790,110 800,118 810,128 813,142 810,165 810,202 826,212 827,240 830,255 831,271 868,272 900,267 945,262 980,248 1000,237 1018,234 1045,241 1085,235 1100,226 1120,222 1150,209 1190,197 1225,178 1265,166 1298,168 1340,190 1370,201 1400,206 1422,211 1440,207 1458,205 1480,207 1505,209 1518,205 1535,208 1550,205 1568,205";
const W_LINES = [
  W_EDGE,
  "5,193 15,197 25,208 35,233 52,265 60,280 75,284 108,286 112,295 100,340 91,360 90,378 97,385 105,388 125,387 135,383 147,385 160,394 172,396 190,392 210,401 217,415 217,427 205,445 196,458 194,468 197,477 215,495 238,512 265,514 276,520 273,548 280,558 300,572 330,595 380,627 390,629 415,627 430,634 480,654 500,665 520,672 540,670 558,682 566,695 570,706 585,711 625,711 650,702 695,691 720,692 745,697 775,715 800,732 815,740 822,748",
  "831,271 835,293 860,315 885,338 905,350 906,366 897,371 885,367 863,355 861,374 852,375 835,364 805,354 775,357 762,365 765,385 771,410 770,432 762,460 762,474 768,487 790,502 828,528 847,552 859,590 855,605 840,622 825,645 823,656 833,690 836,712 832,732 822,748",
  "822,748 850,762 880,769 928,785 935,795 932,810 905,836 885,848 820,858 780,871 720,880 645,891 625,902 597,905 582,912 532,919 510,911 440,890 355,865 305,858 250,869 185,880 162,891 80,896 35,892 9,904",
  "873,768 876,759 897,762 915,750 935,743 955,747 975,758 989,774 979,780 985,794 1000,802 1010,813 1004,818 975,803 970,812 968,830 973,855 965,885 940,920 933,930 934,940 950,949 965,952 974,952 970,958 958,957 930,951 905,950 880,955 866,972 865,990 872,1008 897,1037 915,1065 940,1110 950,1130 957,1138 970,1128 1000,1093 1040,1055 1065,1035 1088,1023 1105,1000 1123,976 1185,996 1215,993 1196,1040 1240,1068 1245,1078 1246,1110 1256,1157 1251,1190 1254,1220 1246,1248 1230,1262 1229,1290 1237,1306",
  "974,952 958,942 960,934 988,928 996,905 1007,882 1045,850 1080,822 1090,823 1110,839 1120,842 1160,831 1200,840 1222,852 1230,870 1250,892 1270,902 1275,898 1262,870 1240,820 1237,806 1245,802 1270,806 1282,818 1284,840 1288,848 1296,848 1303,830 1302,815 1290,800 1280,793 1282,787 1312,784",
  "1562,1113 1548,1130 1500,1172 1440,1225 1410,1245 1378,1263 1300,1291 1268,1303 1237,1306 1208,1296 1170,1301 1148,1312 1135,1332 1120,1360 1098,1383 1096,1390 1100,1415 1092,1450 1063,1504",
  "1237,1306 1195,1324 1180,1338 1178,1350 1184,1375 1183,1415 1188,1419 1215,1422 1220,1430 1224,1455",
  "1268,1470 1277,1504",
];
const C_EDGE = "907,79 911,72 914,60 918,45 930,28 940,15 950,0 990,-48 1005,-55 1030,-40 1050,-20 1072,-8 1090,0 1105,10 1118,17 1122,28 1112,32 1112,42 1140,50 1170,59 1185,49 1207,31 1213,41 1235,24 1249,7 1270,15 1312,27 1328,47 1350,26 1385,60 1423,95 1430,89 1438,90 1447,73";
const N_EDGE = "297,-121 330,-119 360,-124 400,-122 440,-118 480,-113 520,-100 560,-70 620,-62 690,-55 760,-44 790,-20 835,0 847,15 862,28 880,42 893,53 900,66 902,75 907,79";
const C_LINES = [
  N_EDGE, C_EDGE,
  "907,79 911,100 910,130 908,170 905,200 905,215",
  "838,1274 910,1311 960,1350 1020,1400 1060,1430 1112,1472",
  "1192,1475 1205,1433 1216,1475",
  "1560,1074 1550,1072 1530,1056 1515,1051 1495,1045 1484,1052 1486,1062 1500,1078 1498,1088 1475,1102 1450,1107 1433,1118 1431,1145 1412,1152 1411,1165 1417,1178 1428,1176 1432,1185 1420,1197 1412,1208 1412,1217 1428,1218 1435,1206 1450,1212 1465,1213 1475,1198 1487,1191 1494,1200 1487,1225 1486,1248 1467,1278 1466,1328 1485,1334 1492,1350 1492,1362 1485,1375 1475,1380 1464,1379 1474,1406 1480,1391 1490,1386 1498,1389 1500,1398 1513,1402 1515,1416 1528,1420 1530,1430 1528,1444 1540,1450 1550,1445 1560,1455 1574,1464 1590,1474",
];
const URBANO = "220,196 244,215 270,205 300,198 345,201 363,198 380,190 418,186 424,156 393,142 395,120 402,95 412,90 452,93 456,103 462,95 466,99 474,95 492,107 482,132 500,157 530,183 543,185 562,160 580,143 593,147 597,158 605,162 612,155 632,183 634,165 645,155 655,163 680,140 695,126 710,135 728,140 736,158 745,152 752,143 757,130 770,117 795,121 850,166 910,222 922,150 933,127 983,200 965,245 955,265 950,287 1020,317 1065,314 1070,292 1080,274 1103,280 1103,308 1108,312 1080,404 1135,423 1133,435 1158,446 1142,528 1165,533 1203,556 1185,570 1186,582 1170,585 1171,596 1181,606 1178,622 1192,633 1197,615 1220,620 1220,635 1211,642 1213,664 1268,663 1265,674 1486,869 1430,932 1408,910 1390,928 1378,938 1368,930 1352,937 1330,920 1327,905 1318,890 1305,872 1285,858 1280,846 1275,852 1258,852 1256,844 1265,836 1256,826 1240,822 1241,797 1228,793 1210,780 1206,750 1208,710 1215,685 1218,679 1183,667 1175,692 1170,695 1163,750 1132,750 1132,653 1097,645 1105,600 1082,598 1075,642 1062,643 1004,672 888,1084 922,1098 917,1110 885,1096 838,1272 806,1256 782,1290 765,1276 742,1312 732,1300 746,1270 716,1243 688,1303 664,1281 680,1243 668,1230 592,1230 543,1334 513,1292 482,1341 462,1336 412,1287 412,1275 405,1262 380,1257 348,1272 308,1259 305,1200 304,1120 310,1050 316,985 300,986 293,975 280,962 258,953 245,961 220,968 202,986 185,978 172,984 150,958 148,945 132,930 134,917 150,908 155,850 138,850 122,823 138,805 135,783 120,780 102,770 108,712 76,718 98,697 108,670 124,660 110,640 108,625 95,618 80,600 70,585 82,580 95,600 105,615 118,615 145,602 170,578 182,560 187,545 188,505 195,496 183,490 180,470 178,410 181,390 175,365 160,355 152,340 140,330 133,314 165,314 195,322 220,324 215,300 203,293 208,275 193,270 205,230";
const E_TOP = "26,360 150,423 390,323 396,329 415,321 433,319 455,308 475,303 500,307 510,304 525,291 533,287 545,288 552,294 565,318 567,340 561,372 566,388 556,412 561,430 556,440 570,465 574,485 587,507 596,521 607,516 617,520 623,526 637,525 645,533 655,535 675,518 700,517 715,510 720,497 720,475 728,462 745,450 775,443 799,432 799,424 792,412 794,397 808,392 818,398 824,409 835,405 844,400 848,404 848,415 858,421 867,407 878,397 888,395 892,400 890,408 900,411 915,400 930,375 945,350 975,335 981,325 983,311 991,310 995,321 1015,331 1050,324 1090,315 1105,317 1120,337 1122,350 1120,395 1127,425 1140,445 1165,470 1195,492 1210,504 1235,514 1260,518 1280,525 1300,518 1325,510 1340,501 1357,492 1367,496 1380,523 1395,556 1404,566 1415,587 1430,602 1445,609 1470,615 1500,636 1550,669";
const E_BOTTOM = "1550,968 1543,975 1520,995 1500,1007 1475,1028 1450,1045 1415,1058 1400,1070 1360,1088 1330,1097 1315,1110 1300,1111 1280,1123 1258,1127 1243,1141 1215,1146 1185,1157 1178,1165 1172,1177 1150,1182 1120,1187 1105,1200 1085,1224 1040,1251 1000,1275 960,1303 925,1305 905,1311 882,1313 870,1289 862,1289 857,1293 848,1290 835,1272 810,1253 787,1231 748,1256 730,1270 730,1323 748,1333 754,1345 752,1360 744,1371 735,1374 712,1378 701,1405 731,1492";
const E_LINES = [
  E_TOP, E_BOTTOM,
  "623,526 592,577 570,595 550,601 543,613 527,621 513,619 511,609 506,612 508,622 490,624 473,630 472,640 485,641 483,648 500,655 506,665 506,680 498,691 488,691 481,685 478,672 465,672 450,671 448,678 454,686 450,694 436,696 444,696 450,706 447,728 437,733 430,740 420,741 407,730 397,718 390,726 385,750 373,793 380,798 382,812 391,824 380,857 380,880 375,908 360,932 335,943 300,946 262,942 250,948 242,965 241,990 249,1018 249,1028 240,1036 228,1042 216,1037 218,1052 228,1062 243,1069 248,1078 246,1087 225,1090 218,1098 210,1101 205,1115 198,1119 180,1112 177,1120 177,1138 160,1142 150,1158 140,1167 128,1168",
  "67,1003 98,1025 170,1022 180,1018 185,1005 193,1001 255,1004 320,990 365,984 382,967 395,965 580,958 598,962 748,1256",
];
const LABELS = [
  ["VENTALARGA", 753, 543, 158], ["SAN ANTONIO", 1181, 569, 171], ["SAN ISIDRO", 668, 768, 145], ["EL CENTRO", 1158, 903, 135],
  ["BARROBLANCO", 793, 1067, 180], ["SAN JORGE", 1145, 1235, 135], ["URBANO", 1566, 841, 102], ["PORTACHUELO", 1408, 1208, 177],
  ["PASOANCHO", 1879, 1063, 151], ["LA GRANJA", 2082, 699, 132], ["EL TUNAL", 2647, 836, 116], ["BARANDILLAS", 2271, 1093, 166],
];
const Lines = ({ list, m }) => (
  <g transform={m} stroke="#000" strokeWidth="2.900" strokeLinejoin="round">
    {list.map((p, i) => <polyline key={i} points={p} vectorEffect="non-scaling-stroke" />)}
  </g>
);
function MapView() {
  return (
    <svg width="2480" height="881" viewBox="575 367 2480 881" fill="none" className="block bg-[#b2b2b2]">
      <g fill="#fff">
        <polygon transform={SHEET_W} points={`${W_EDGE} 1568,80`} />
        <polygon transform={SHEET_C} points={`297,-270 ${N_EDGE} ${C_EDGE} 1447,-270`} />
        <polygon transform={SHEET_E} points={`26,80 ${E_TOP} 1550,80`} />
        <polygon transform={SHEET_E} points={`${E_BOTTOM} 1550,1492`} />
      </g>
      <Lines list={W_LINES} m={SHEET_W} />
      <Lines list={C_LINES} m={SHEET_C} />
      <Lines list={E_LINES} m={SHEET_E} />
      <g transform={SHEET_C} strokeLinejoin="round">
        <polygon points={URBANO} stroke="#22e8ea" strokeWidth="7.500" vectorEffect="non-scaling-stroke" />
        <polygon points={URBANO} stroke="#0ab4b8" strokeWidth="2.600" vectorEffect="non-scaling-stroke" />
      </g>
      <g fill="#000" stroke="#fff" strokeWidth="5" strokeLinejoin="round" className="[paint-order:stroke] font-['DejaVu_Sans_Condensed','DejaVu_Sans',sans-serif] text-[26.500px]">
        {LABELS.map(([n, x, y, w]) => <text key={n} x={x} y={y} textLength={w} lengthAdjust="spacingAndGlyphs">{n}</text>)}
      </g>
    </svg>
  );
}
const VBar = ({ cls }) => <div className={`h-[28px] w-[2px] shrink-0 bg-[#a9a9a9] ${cls}`} />;

function MapPane() {
  return (
    <div className="flex h-[983px] flex-col">
      <div className="flex h-[44px] items-end">
        <div className="flex h-[44px] w-[244px] items-center rounded-t-[6px] bg-[#d2d4d8] pl-[12px] text-[23px] text-[#4c4c4c]">
          <MapIcon /><T w={138} className="ml-[10px] pt-[3px]">DEMContour</T><Cross className="ml-[16px] text-[#6a6a6a]" />
        </div>
        <Chev w={17} sw={2.600} className="mr-[10px] mb-[15px] ml-auto text-[#6a6a6a]" />
      </div>
      <div className="h-[5px] bg-[#d2d4d8]" />
      <div className="border-x-2 border-b-2 border-[#d2d4d8] bg-[#f7f9f8]">
        <MapView />
        <div className="flex h-[49px] items-center text-[23px] text-[#4c4c4c]">
          <div className="ml-[10px] flex h-[43px] w-[200px] items-center border-2 border-[#a5a5a5] bg-white pr-[9px] pl-[10px] text-black"><T w={86} className="mr-auto pt-[3px]">1:45,056</T><Down /></div>
          <VBar cls="ml-[9px]" />
          <div className="ml-[8px] flex size-[41px] shrink-0 items-center justify-center border-2 border-[#0a6aa8] bg-[#9dcbea]"><SnapIcon s={32} /></div>
          <Svg s={28} className="ml-[5px]"><path d="M1 2h25v23H1zM1 8h25M1 14h25M1 19.500h25M7 2v23M13.500 2v23M20 2v23" stroke="#999" strokeWidth="1.800" /></Svg>
          <Svg className="ml-[10px]">
            <path d="m2 26 28-8v11H2z" fill="#b9dcf3" /><path d="M1 28h28" stroke="#6fb06f" strokeWidth="2" />
            <path d="M2 3h7v4H2zM22 17h8v4h-8z" fill="#fff" stroke="#6a6a6a" strokeWidth="2" /><path d="M22 6h8M26 2v8M12 5h7M26 12v5" stroke="#6a6a6a" strokeWidth="2" />
            <path d="M5 20 18 8M5 14v6h7M12 8h6v6" stroke="#4a9fd8" strokeWidth="2" /><path d="M1 25h5v5H1z" fill="#5b9a5b" />
          </Svg>
          <Svg className="ml-[9px]"><path d="M1 2h13v12H1z" fill="#d5ead3" /><path d="M16 1v30M0 16h32" stroke="#8a8a8a" strokeWidth="1.800" strokeDasharray="3 2" /><path d="M13 13h6v6h-6z" fill="#6a6a6a" /></Svg>
          <Svg className="ml-[7px]"><path d="M1.500 22V10l7 11V9" stroke="#4a9fd8" strokeWidth="3" /><path d="M15 2v28l15-14" stroke="#6a6a6a" strokeWidth="1.800" /><path d="M20 4c5 0 6 4 7 9M23 9l4 5 4-5" stroke="#4a9fd8" strokeWidth="2.400" /></Svg>
          <Chev w={16} sw={3} className="ml-[13px] text-[#222]" />
          <VBar cls="ml-[16px]" />
          <T w={295} className="ml-[605px] pt-[5px]">73.9992732°W 5.0201594°N</T>
          <Chev w={19} sw={4} className="mt-[3px] ml-[19px] text-[#6a6a6a]" />
          <div className="mr-[9px] ml-auto flex items-center">
            <VBar cls="" />
            <div className="ml-[9px] flex h-[40px] w-[265px] items-center bg-white pl-[6px]"><ZoomSel /><T w={212} className="ml-[7px] pt-[2px]">Selected Features: 2</T></div>
            <VBar cls="ml-[8px]" />
            <div className="ml-[17px]"><PolyIcon s={28} /></div>
            <VBar cls="ml-[16px]" />
            <div className="ml-[15px] flex gap-[5px]"><i className="h-[27px] w-[9px] bg-[#6a6a6a]" /><i className="h-[27px] w-[9px] bg-[#6a6a6a]" /></div>
            <VBar cls="ml-[17px]" />
            <div className="ml-[11px]"><Refresh /></div>
          </div>
        </div>
      </div>
    </div>
  );
}

/* ---------- attribute table ---------- */
const COLS = [
  ["OBJECTID *", 129, "w-[150px]"], ["Shape *", 86, "w-[106px]"], ["OBJECTID_1", 134, "w-[156px]"], ["DPTOMPIO", 127, "w-[149px]"],
  ["CODIGO_VER", 150, "w-[229px]"], ["NOM_DEP", 115, "w-[295px]"], ["NOMB_MPIO", 149, "w-[297px]"], ["NOMBRE_VER", 157, "w-[296px]"],
  ["VIGENCIA", 110, "w-[131px]"], ["FUENTE", 88, "w-[296px]"], ["DESCRIPCIO", 137, "w-[278px]"],
];
const TEXT_W = {
  Polygon: 86, "<Null>": 73, CUNDINAMARCA: 188, "ZIPAQUIRÁ": 117, "EL TUNAL": 103, "SAN ANTONIO": 157, "SAN ISIDRO": 126,
  VENTALARGA: 144, "PARAMO DE GUERRERO": 257, "EL EMPALIZADO": 172, "LA GRANJA": 121, URBANO: 94, 2010: 51, POT: 41, NULL: 55,
};
const record = (id, a, cod, name) => [String(id), "Polygon", a, "25899", cod, "CUNDINAMARCA", "ZIPAQUIRÁ", name, "2010", "POT", "NULL"];
const N = "<Null>";
const ROWS = [
  record(8, "27581", "25899005", "EL TUNAL"),
  record(9, "27582", "25899011", "SAN ANTONIO"),
  record(10, "27583", "25899012", "SAN ISIDRO"),
  record(11, "27584", "25899014", "VENTALARGA"),
  record(12, "27585", "25899007", "PARAMO DE GUERRERO"),
  record(13, "27586", "25899004", "EL EMPALIZADO"),
  record(14, "27587", "25899006", "LA GRANJA"),
  ["15", "Polygon", N, N, N, N, N, "URBANO", N, N, N],
];
const cellWidth = (v) => TEXT_W[v] || Math.round(v.length * 12.900);
const ToolBtn = ({ icon, label, w, cls = "" }) => (
  <div className={`flex shrink-0 items-center ${cls}`}>{icon}<T w={w} className="ml-[6px]">{label}</T></div>
);
const CalcMark = ({ plus }) => (
  <>
    <path d="M8 14h16v18H8z" fill="#eef0f2" />
    {plus ? <path d="M12 16v16M4 24h16" stroke="#5a5a5a" strokeWidth="3.400" /> : <path d="M10 17h14v12H10zM14 21h6M13 25h8" stroke="#8a8a8a" strokeWidth="2.400" strokeDasharray="4 2" />}
    <path d="M9 11h7v8H9z" fill="#9d93c4" opacity=".6" />
  </>
);

function TablePane() {
  return (
    <div className="mt-[10px] flex flex-col text-[23px] text-[#4c4c4c]">
      <div className="flex h-[45px] items-end">
        <div className="flex h-[45px] w-[310px] items-center rounded-t-[6px] bg-[#d2d4d8] pl-[12px]">
          <TableIcon /><T w={203} className="ml-[12px] pt-[2px]">Mpio25899_DiviPol</T><Cross className="ml-[16px] text-[#6a6a6a]" />
        </div>
        <Chev w={17} sw={2.600} className="mr-[10px] mb-[16px] ml-auto text-[#6a6a6a]" />
      </div>
      <div className="h-[5px] bg-[#d2d4d8]" />
      <div className="border-2 border-t-0 border-[#d2d4d8] bg-[#f7f9f8] px-[2px] pt-[3px]">
        <div className="flex h-[60px] items-center border-2 border-[#c3c5c9] bg-[#eef0f2] pr-[13px] pl-[10px]">
          <div className="w-[77px] font-bold"><T w={61}>Field:</T></div>
          <ToolBtn cls="w-[101px]" icon={<TableIcon s={32}><CalcMark plus /></TableIcon>} label="Add" w={43} />
          <ToolBtn cls="w-[156px]" icon={<TableIcon s={32}><CalcMark /></TableIcon>} label="Calculate" w={97} />
          <div className="h-[44px] w-[2px] bg-[#cfd1d5]" />
          <div className="ml-[13px] w-[127px] font-bold"><T w={110}>Selection:</T></div>
          <ToolBtn cls="w-[266px]" icon={
            <Svg><path d="M1 1h18v6M1 1v17h9" fill="#b3e8f9" stroke="#6a6a6a" strokeWidth="2" /><path d="M9 1c0 6 5 6 6 9M12 5l7-1" stroke="#6a6a6a" strokeWidth="1.600" />
              <rect x="14" y="12" width="17" height="19" fill="#fff" stroke="#6a6a6a" strokeWidth="2" /><path d="M15 13h15v4H15z" fill="#63b1e5" /><path d="M14 18h17M14 24h17M20 18v13M26 18v13" stroke="#6a6a6a" strokeWidth="1.800" /></Svg>} label="Select By Attributes" w={208} />
          <ToolBtn cls="w-[153px]" icon={
            <Svg><path d="M11 1h20v19H20M12 6h18M18 10h12M19 15h11" fill="#fff" stroke="#6a6a6a" strokeWidth="2" />
              <circle cx="10" cy="17" r="8.500" fill="#fff" stroke="#4a9fd8" strokeWidth="2.200" /><path d="M10 12v10M5 17h10" stroke="#5a5a5a" strokeWidth="2.200" /><path d="m16 24 6 7" stroke="#c08a4e" strokeWidth="3.500" /></Svg>} label="Zoom To" w={94} />
          <ToolBtn cls="w-[127px]" icon={
            <Svg><path d="M1 1h18M1 6h18M1 11h18M1 1v10M19 1v4M13 19h18M13 25h18M13 31h18M31 18v13M13 18v13" stroke="#6a6a6a" strokeWidth="2" /><path d="M14 20h16v3H14zM14 26.500h16v3H14z" fill="#9ee0f8" />
              <path d="M22 3c4 0 6 3 6 8M24 9l4 4 4-4M9 30c-4 0-5-3-5-9M0 23l4-4 4 4" stroke="#5a5a5a" strokeWidth="2" /></Svg>} label="Switch" w={69} />
          <ToolBtn cls="w-[111px]" icon={<RowsIcon />} label="Clear" w={54} />
          <ToolBtn cls="w-[129px]" icon={<RowsIcon hl mid><path d="M4 16h14v16H4z" fill="#eef0f2" /><path d="m5 19 11 11M16 19 5 30" stroke="#d2603f" strokeWidth="3.600" /></RowsIcon>} label="Delete" w={68} />
          <ToolBtn cls="" icon={
            <Svg><path d="M8 1h23v18h-4V9H8z" fill="#b3e8f9" stroke="#6a6a6a" strokeWidth="2" /><path d="M8 5.500h23" stroke="#6a6a6a" strokeWidth="2" />
              <rect x="1" y="12" width="25" height="18" fill="#b3e8f9" stroke="#6a6a6a" strokeWidth="2" /><path d="M2 19h23v4H2z" fill="#fff" /><path d="M1 18h25M1 24h25" stroke="#6a6a6a" strokeWidth="2" /></Svg>} label="Copy" w={55} />
          <div className="mb-[3px] ml-auto flex flex-col gap-[4px]"><i className="h-[6px] w-[28px] rounded-[2px] bg-[#5f5f5f]" /><i className="h-[6px] w-[28px] rounded-[2px] bg-[#5f5f5f]" /><i className="h-[6px] w-[28px] rounded-[2px] bg-[#5f5f5f]" /></div>
        </div>
        <div className="mt-[2px] flex h-[573px] border-2 border-[#c9cacb] bg-[#ebebeb]">
          <div className="w-[2433px]">
            <div className="flex h-[52px] text-[22.500px] font-bold">
              <div className="flex w-[50px] items-end justify-end bg-white pr-[6px] pb-[7px]"><svg width="21" height="21" viewBox="0 0 21 21"><path d="M21 0v21H0z" fill="#c8c8c8" /></svg></div>
              {COLS.map(([n, w, c]) => (
                <div key={n} className={`${c} flex shrink-0 items-center border-r-2 border-[#d9dadb] pl-[9px] ${n === "NOMBRE_VER" ? "border-b-[5px] border-b-[#007ac2] bg-[#c9e3f6] pt-[5px]" : ""}`}><T w={w}>{n}</T></div>
              ))}
            </div>
            <div className="flex h-[9px] border-b-2 border-[#c9cacb] pl-[50px]">
              {COLS.map(([n, , c]) => <div key={n} className={`${c} shrink-0 border-r-2 border-[#c9cacb] bg-white`} />)}
            </div>
            {ROWS.map((r, i) => (
              <div key={r[0]} className="flex h-[52px] border-b-2 border-[#c9cacb]">
                <div className="flex w-[50px] items-center border-r-2 border-[#dcdcdc] pl-[9px]"><T w={cellWidth(r[0])}>{r[0]}</T></div>
                {r.map((v, j) => (
                  <div key={j} className={`${COLS[j][2]} flex shrink-0 items-center border-r-2 border-[#c9cacb] pt-[1px] ${i === 7 ? "bg-[#8affff]" : i % 2 ? "bg-white" : "bg-[#ebebeb]"} ${j === 2 ? "justify-end pr-[7px]" : "pl-[9px]"}`}><T w={cellWidth(v)}>{v}</T></div>
                ))}
              </div>
            ))}
            <div className="flex h-[52px] border-b-2 border-[#d0d4d8] bg-[#c9e3f6]">
              <div className="w-[50px] border-r-[5px] border-[#007ac2]" />
              <T w={229} className="self-center pl-[9px]">Click to add new row.</T>
            </div>
            <div className="flex h-[37px] items-center pr-[14px] pl-[13px]">
              <SideChev /><div className="ml-[15px] h-[21px] w-[950px] rounded-full bg-[#b3b3b3]" /><div className="ml-auto"><SideChev right /></div>
            </div>
          </div>
          <div className="flex w-[38px] flex-col items-center">
            <Chev up w={15} sw={3} className="mt-[14px] ml-[2px] text-[#5a5a5a]" />
            <div className="mt-[201px] ml-[2px] h-[264px] w-[20px] rounded-full bg-[#b3b3b3]" />
            <Chev w={15} sw={3} className="mt-[16px] ml-[2px] text-[#5a5a5a]" />
          </div>
        </div>
        <div className="flex h-[52px] items-center">
          <div className="flex h-[44px] w-[64px] items-center justify-center border-2 border-[#3ba9e4] bg-[#c6c8cc]"><RowsIcon hl mid /></div>
          <Svg s={32} className="mb-[3px] ml-[19px]"><rect x="1.500" y="5" width="29" height="20" fill="#b3e8f9" stroke="#6a6a6a" strokeWidth="2.400" /><path d="M2 11.500h28M2 18.500h28" stroke="#6a6a6a" strokeWidth="2.400" /></Svg>
          <Svg s={20} className="mb-[2px] ml-[34px]"><path d="M1.500 0v20" stroke="#5a5a5a" strokeWidth="2" /><path d="M19 1v18L6 10z" fill="#5a5a5a" /></Svg>
          <Svg s={20} className="mb-[2px] ml-[26px]"><path d="M18 0v20" stroke="#c0c0c0" strokeWidth="2" /><path d="M1 1v18l13-9z" fill="#c0c0c0" /></Svg>
          <T w={167} className="ml-[26px]">1 of 15 selected</T>
          <T w={67} className="ml-auto">Filters:</T>
          <div className="ml-[9px] flex h-[48px] w-[83px] items-center gap-[10px] bg-[#eef0f1] pl-[7px]">
            <Svg><circle cx="16" cy="16" r="14" fill="#eef6f0" stroke="#d0d6dc" strokeWidth="2" /><path d="M10 6c6 2 6 10 12 14l-5 7c-6-5-10-10-7-21z" fill="#dcebdc" /><path d="M16 6v11h8" stroke="#c4d4e6" strokeWidth="2" /></Svg>
            <Svg><circle cx="17" cy="17" r="13" fill="#eef6f0" stroke="#d5dadf" strokeWidth="2" /><path d="M18 12l10 4-3 11-8-4z" fill="#d2e6d2" /><path d="M4 0v16M12 0v16M20 0v16M1 5h6M9 11h6M17 5h6" stroke="#bcd6ea" strokeWidth="2" /></Svg>
          </div>
          <Svg s={34} vb="0 0 36 36" className="ml-[6px]"><path d="M1 2h25v4l-9 11v16h-6V17L1 6z" fill="#fff" stroke="#6a6a6a" strokeWidth="2" /><path d="M2 6h23l-8 11h-6z" fill="#8f8f8f" /><path d="M17 18h17v16H17z" fill="#fff" stroke="#4a9fd8" strokeWidth="2.600" strokeDasharray="3 2" /><path d="M22 18v16M28 18v16M17 26h17" stroke="#4a9fd8" strokeWidth="2" strokeDasharray="3 2" /></Svg>
          <VBar cls="ml-[2px]" />
          <svg width="28" height="34" viewBox="0 0 28 34" fill="none" className="ml-[8px] shrink-0"><path d="M14 3v14M6 11l8-9 8 9" stroke="#b4d6b4" strokeWidth="4" /><path d="M14 17v14M6 23l8 9 8-9" stroke="#f4cfa8" strokeWidth="4" /></svg>
          <div className="ml-[23px] h-[4px] w-[13px] bg-[#5f5f5f]" />
          <div className="ml-[15px] flex w-[201px] items-center"><div className="h-[6px] w-[103px] bg-[#5f5f5f]" /><div className="h-[22px] w-[6px] bg-[#5f5f5f]" /><div className="h-[6px] flex-1 bg-[#dedede]" /></div>
          <Svg s={16} className="ml-[14px]"><path d="M8 0v16M0 8h16" stroke="#5f5f5f" strokeWidth="3" /></Svg>
          <div className="ml-[14px] flex h-[42px] w-[120px] items-center justify-between bg-white pr-[10px] pl-[11px] text-black"><T w={66}>110 %</T><Down /></div>
          <VBar cls="ml-[10px]" />
          <div className="mr-[10px] ml-[13px]"><Refresh /></div>
        </div>
      </div>
    </div>
  );
}

/* ---------- create features pane ---------- */
const DOCK = [["Catalog", 82, "w-[107px]"], ["Geoproc...", 108, "w-[128px]"], ["Create F...", 107, "w-[123px]"], ["Modify...", 91, "w-[138px]"], ["Symbol...", 97, "w-[130px]"], ["Label Cl...", 102, "w-[110px]"]];
const DOCK_STYLE = ["pl-[10px]", "pl-[10px]", "-mt-[2px] ml-[8px] h-[44px] border-x-2 border-b-2 border-[#d2d4d8] bg-[#f7f9f8] pl-[8px] text-[#007ac2]", "pl-[19px]", "pl-[10px]", "pl-[10px]"];
function CreatePane() {
  return (
    <div className="ml-[12px] flex w-[761px] shrink-0 flex-col text-[23px] text-[#4c4c4c]">
      <div className="h-[1693px] rounded-t-[6px] border-2 border-[#d2d4d8] bg-[#f7f9f8]">
        <div className="flex h-[65px] items-center pr-[14px] pl-[11px]">
          <T w={219} className="text-[31px] text-[#151515]">Create Features</T>
          <span className="ml-auto text-[25px] leading-none font-semibold">?</span>
          <Chev sw={2.800} className="ml-[20px]" />
          <div className="ml-[21px]"><Pin /></div>
          <Cross className="ml-[18px] text-[#4c4c4c]" />
        </div>
        <div className="flex items-center pl-[12px]"><Funnel /><SearchBox cls="ml-[15px] w-[646px] pl-[17px]" /><div className="ml-[12px]"><TemplatesIcon /></div></div>
        <div className="flex h-[86px] items-start pt-[26px] pl-[13px]">
          <div className="flex h-[36px] border-b-[4px] border-[#007ac2]"><T w={118} className="font-semibold">Templates</T></div>
          <T w={99} className="ml-[19px]">Favorites</T>
        </div>
        <div className="flex h-[52px] items-center bg-[#deeef9] pr-[14px] pl-[25px]">
          <Svg s={24}><circle cx="12" cy="12" r="12" fill="#57a8dc" /><path d="M9 10h4v8M8 18.500h8M12 4v3.500" stroke="#fff" strokeWidth="2.800" /></Svg>
          <T w={401} className="ml-[34px] pt-[2px]">Click here to see templates not listed.</T>
          <Cross s={19} className="ml-auto text-[#868686]" />
        </div>
        <div className="mt-[8px] flex h-[48px] items-center pl-[12px]"><Chev w={17} sw={4} className="text-[#6a6a6a]" /><T w={228} className="ml-[6px] text-[24px] font-semibold">Mpio25899_DiviPol</T></div>
        <div className="flex h-[48px] items-center pl-[33px]"><div className="h-[27px] w-[32px] border-2 border-black bg-[#b2b2b2]" /><T w={202} className="ml-[12px] pt-[1px]">Mpio25899_DiviPol</T></div>
        <div className="flex h-[48px] items-center pl-[12px]"><Chev w={17} sw={4} className="text-[#6a6a6a]" /><T w={595} className="ml-[6px] text-[24px] font-semibold">Mpio25899_MOT2013_IGAC_2013_CurvasNivel_Stat</T></div>
        <div className="flex h-[48px] items-center pl-[33px]">
          <Svg>
            <path d="M1 1h19v6M1 1v12h9M7 1v12M14 1v6M1 7h12" stroke="#6a6a6a" strokeWidth="2" />
            <rect x="11" y="7.500" width="20" height="23.500" rx="2.500" fill="#fff" stroke="#6a6a6a" strokeWidth="2" />
            <path d="M14 13h4" stroke="#4a9fd8" strokeWidth="4" /><path d="M14 19h4" stroke="#5fa55f" strokeWidth="4" /><path d="M14 25.500h4" stroke="#e0984a" strokeWidth="4" /><path d="M20 13h8M20 19h8M20 25.500h8" stroke="#6a6a6a" strokeWidth="2" />
          </Svg>
          <T w={544} className="ml-[12px] pt-[1px]">Mpio25899_MOT2013_IGAC_2013_CurvasNivel_Stat</T>
        </div>
      </div>
      <div className="flex h-[44px]">
        {DOCK.map(([n, w, c], i) => (
          <div key={n} className={`${c} ${DOCK_STYLE[i]} flex min-h-[42px] shrink-0 items-center`}><T w={w}>{n}</T></div>
        ))}
      </div>
    </div>
  );
}

export default function App() {
  return (
    <div className="h-[2060px] w-[3834px] overflow-hidden bg-[#eaeaea] font-['Open_Sans','Noto_Sans',sans-serif]">
      <div className="bg-[#f7f9f8]">
        <TitleBar />
        <RibbonTabs />
        <Ribbon />
      </div>
      <div className="flex pt-[12px]">
        <ContentsPane />
        <div className="ml-[12px] w-[2484px] shrink-0"><MapPane /><TablePane /></div>
        <CreatePane />
      </div>
    </div>
  );
}
